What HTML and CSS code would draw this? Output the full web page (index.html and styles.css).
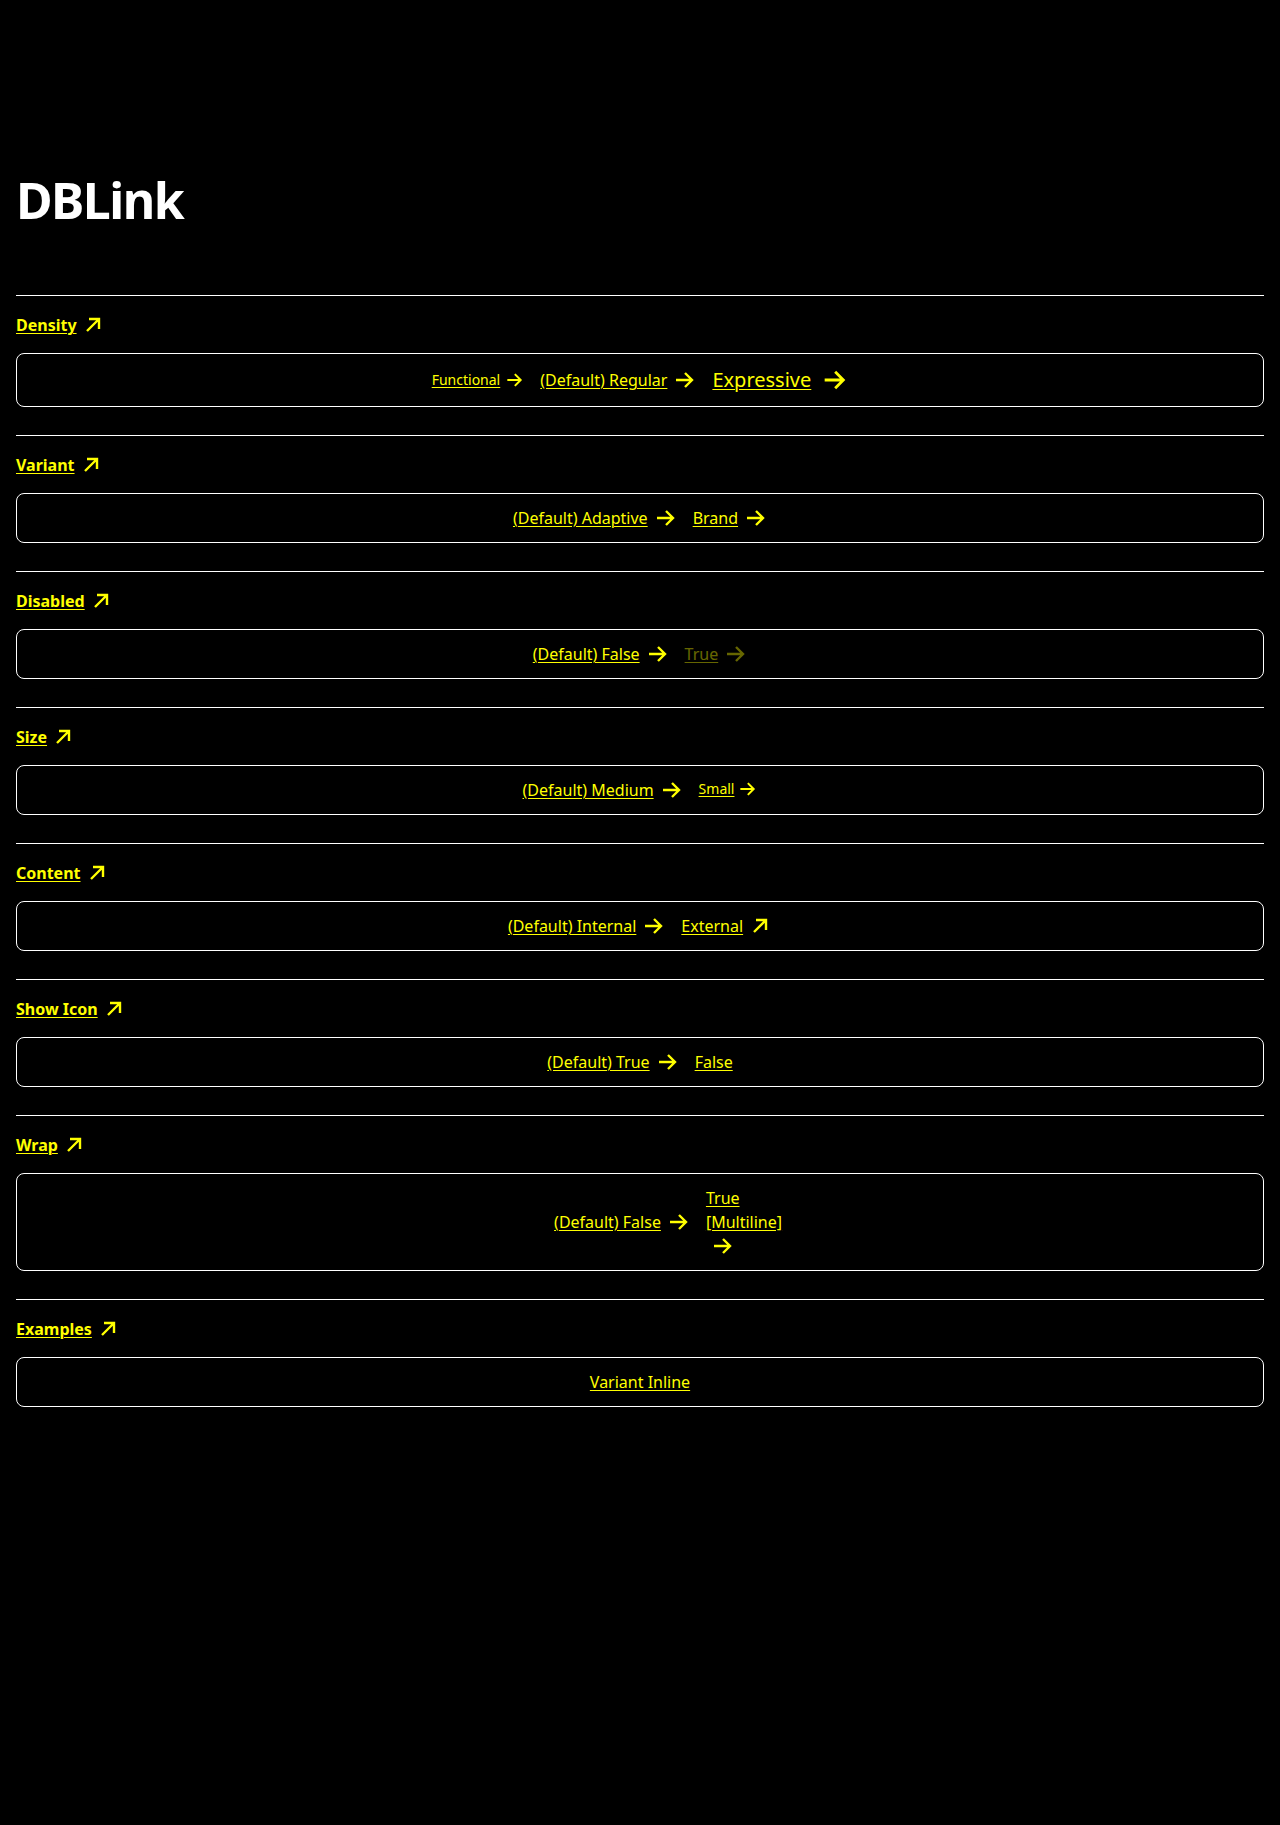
FILE: index.html
```html
<!DOCTYPE html>
<html lang="en">
<head>
<meta charset="utf-8">
<title>DBLink</title>
<link rel="stylesheet" href="styles.css">
</head>
<body>
<main class="page">
  <h1 class="title">DBLink</h1>

  <section class="group">
    <h2 class="group-head"><a class="head-link" href="#"><span class="link-text">Density</span><svg class="ico" viewBox="0 0 24 24"><path d="M6 18 L18 6 M8 6 H18 V16"/></svg></a></h2>
    <div class="demo">
      <a class="link link-sm" href="#"><span class="link-text">Functional</span><svg class="ico" viewBox="0 0 24 24"><path d="M4 12 H20 M13 5 L20 12 L13 19"/></svg></a>
      <a class="link" href="#"><span class="link-text">(Default) Regular</span><svg class="ico" viewBox="0 0 24 24"><path d="M4 12 H20 M13 5 L20 12 L13 19"/></svg></a>
      <a class="link link-lg" href="#"><span class="link-text">Expressive</span><svg class="ico" viewBox="0 0 24 24"><path d="M4 12 H20 M13 5 L20 12 L13 19"/></svg></a>
    </div>
  </section>

  <section class="group">
    <h2 class="group-head"><a class="head-link" href="#"><span class="link-text">Variant</span><svg class="ico" viewBox="0 0 24 24"><path d="M6 18 L18 6 M8 6 H18 V16"/></svg></a></h2>
    <div class="demo">
      <a class="link" href="#"><span class="link-text">(Default) Adaptive</span><svg class="ico" viewBox="0 0 24 24"><path d="M4 12 H20 M13 5 L20 12 L13 19"/></svg></a>
      <a class="link" href="#"><span class="link-text">Brand</span><svg class="ico" viewBox="0 0 24 24"><path d="M4 12 H20 M13 5 L20 12 L13 19"/></svg></a>
    </div>
  </section>

  <section class="group">
    <h2 class="group-head"><a class="head-link" href="#"><span class="link-text">Disabled</span><svg class="ico" viewBox="0 0 24 24"><path d="M6 18 L18 6 M8 6 H18 V16"/></svg></a></h2>
    <div class="demo">
      <a class="link" href="#"><span class="link-text">(Default) False</span><svg class="ico" viewBox="0 0 24 24"><path d="M4 12 H20 M13 5 L20 12 L13 19"/></svg></a>
      <a class="link is-disabled" aria-disabled="true"><span class="link-text">True</span><svg class="ico" viewBox="0 0 24 24"><path d="M4 12 H20 M13 5 L20 12 L13 19"/></svg></a>
    </div>
  </section>

  <section class="group">
    <h2 class="group-head"><a class="head-link" href="#"><span class="link-text">Size</span><svg class="ico" viewBox="0 0 24 24"><path d="M6 18 L18 6 M8 6 H18 V16"/></svg></a></h2>
    <div class="demo">
      <a class="link" href="#"><span class="link-text">(Default) Medium</span><svg class="ico" viewBox="0 0 24 24"><path d="M4 12 H20 M13 5 L20 12 L13 19"/></svg></a>
      <a class="link link-sm link-tight" href="#"><span class="link-text">Small</span><svg class="ico" viewBox="0 0 24 24"><path d="M4 12 H20 M13 5 L20 12 L13 19"/></svg></a>
    </div>
  </section>

  <section class="group">
    <h2 class="group-head"><a class="head-link" href="#"><span class="link-text">Content</span><svg class="ico" viewBox="0 0 24 24"><path d="M6 18 L18 6 M8 6 H18 V16"/></svg></a></h2>
    <div class="demo">
      <a class="link" href="#"><span class="link-text">(Default) Internal</span><svg class="ico" viewBox="0 0 24 24"><path d="M4 12 H20 M13 5 L20 12 L13 19"/></svg></a>
      <a class="link" href="#"><span class="link-text">External</span><svg class="ico" viewBox="0 0 24 24"><path d="M6 18 L18 6 M8 6 H18 V16"/></svg></a>
    </div>
  </section>

  <section class="group">
    <h2 class="group-head"><a class="head-link" href="#"><span class="link-text">Show Icon</span><svg class="ico" viewBox="0 0 24 24"><path d="M6 18 L18 6 M8 6 H18 V16"/></svg></a></h2>
    <div class="demo">
      <a class="link" href="#"><span class="link-text">(Default) True</span><svg class="ico" viewBox="0 0 24 24"><path d="M4 12 H20 M13 5 L20 12 L13 19"/></svg></a>
      <a class="link" href="#"><span class="link-text">False</span></a>
    </div>
  </section>

  <section class="group">
    <h2 class="group-head"><a class="head-link" href="#"><span class="link-text">Wrap</span><svg class="ico" viewBox="0 0 24 24"><path d="M6 18 L18 6 M8 6 H18 V16"/></svg></a></h2>
    <div class="demo">
      <a class="link" href="#"><span class="link-text">(Default) False</span><svg class="ico" viewBox="0 0 24 24"><path d="M4 12 H20 M13 5 L20 12 L13 19"/></svg></a>
      <a class="link-wrap" href="#"><span class="link-text">True [Multiline]</span> <svg class="ico ico-wrap" viewBox="0 0 24 24"><path d="M4 12 H20 M13 5 L20 12 L13 19"/></svg></a>
    </div>
  </section>

  <section class="group">
    <h2 class="group-head"><a class="head-link" href="#"><span class="link-text">Examples</span><svg class="ico" viewBox="0 0 24 24"><path d="M6 18 L18 6 M8 6 H18 V16"/></svg></a></h2>
    <div class="demo">
      <a class="link" href="#"><span class="link-text">Variant Inline</span></a>
    </div>
  </section>
</main>
</body>
</html>
```

FILE: styles.css
```css
html, body {
  margin: 0;
  background: #000;
  color: #fff;
  font-family: "Noto Sans", "Open Sans", sans-serif;
}

.page {
  padding: 0 16px 120px;
}

.title {
  margin: 170px 0 65px;
  font-size: 50px;
  line-height: 60px;
  font-weight: 700;
  letter-spacing: -1.5px;
  color: #fff;
}

.group {
  border-top: 1px solid #fff;
  padding: 17px 0 28px;
  display: flex;
  flex-direction: column;
  gap: 16px;
}

.group-head {
  margin: 0;
  font-size: 16px;
  line-height: 24px;
  font-weight: 700;
}

.head-link {
  display: inline-flex;
  align-items: center;
  gap: 4px;
  color: #ffff00;
  text-decoration: none;
}

.link-text {
  text-decoration: underline;
  text-decoration-thickness: 1px;
  text-underline-offset: 2px;
}

.ico {
  width: 24px;
  height: 24px;
  flex: none;
  fill: none;
  stroke: currentColor;
  stroke-width: 2.4;
}

.demo {
  display: flex;
  justify-content: center;
  align-items: center;
  gap: 16px;
  padding: 12px;
  border: 1px solid #fff;
  border-radius: 8px;
}

.link {
  display: inline-flex;
  align-items: center;
  gap: 5px;
  font-size: 16px;
  line-height: 24px;
  color: #ffff00;
  text-decoration: none;
}

.link-sm {
  font-size: 14px;
  line-height: 20px;
  gap: 4px;
}

.link-sm .ico {
  width: 20px;
  height: 20px;
}

.link-tight {
  gap: 3px;
  margin-top: -3px;
}

.link-lg {
  font-size: 20px;
  line-height: 28px;
  gap: 9px;
}

.link-lg .ico {
  width: 28px;
  height: 28px;
}

.is-disabled {
  opacity: 0.4;
}

.link-wrap {
  display: block;
  width: 20px;
  font-size: 16px;
  line-height: 24px;
  color: #ffff00;
  text-decoration: none;
  white-space: normal;
}

.ico-wrap {
  display: inline-block;
  vertical-align: top;
  margin-left: 4px;
}
```
